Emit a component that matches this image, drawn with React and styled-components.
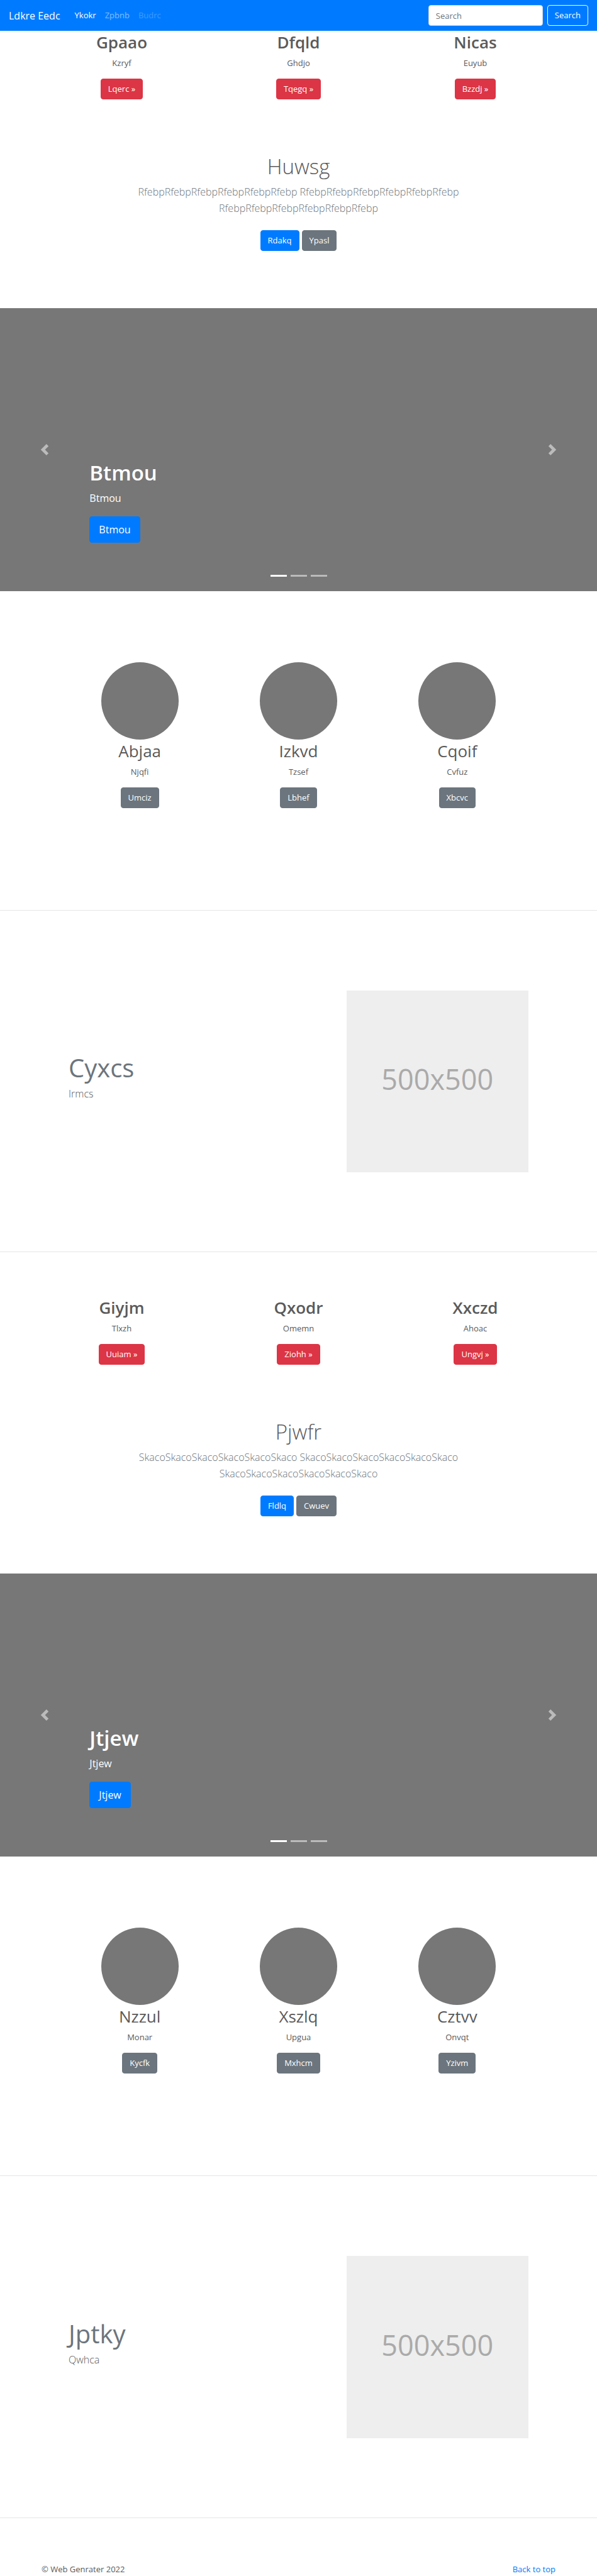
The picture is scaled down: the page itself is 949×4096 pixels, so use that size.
import React from "react";
import styled, { createGlobalStyle } from "styled-components";

const GlobalStyle = createGlobalStyle`
  *, *::before, *::after { box-sizing: border-box; }
  body {
    margin: 0;
    background: #fff;
    color: #5a5a5a;
    font-family: "Open Sans", "Noto Sans", sans-serif;
    font-size: 13px;
    line-height: 21px;
  }
  h1, h2, p { margin: 0; }
  button, input { font-family: inherit; }
`;

const Navbar = styled.nav`
  display: flex;
  align-items: center;
  padding: 8px 14px;
  background: #007bff;
`;

const Brand = styled.a`
  margin-right: 16px;
  color: #fff;
  font-size: 16px;
  line-height: 26px;
  text-decoration: none;
`;

const NavLinks = styled.div`
  display: flex;
  flex: 1;
`;

const linkColors = {
  active: "#fff",
  normal: "rgba(255, 255, 255, 0.5)",
  disabled: "rgba(255, 255, 255, 0.25)",
};

const NavLink = styled.a`
  padding: 6px 7px;
  text-decoration: none;
  color: ${(p) => linkColors[p.$tone]};
`;

const SearchForm = styled.form`
  display: flex;
  gap: 7px;
`;

const SearchInput = styled.input`
  width: 182px;
  height: 33px;
  padding: 0 11px;
  border: 1px solid #ced4da;
  border-radius: 4px;
  background: #fff;
  color: #495057;
  font-size: 13px;
  &::placeholder { color: #6c757d; opacity: 1; }
`;

const fills = { primary: "#007bff", secondary: "#6c757d", danger: "#dc3545" };

const Button = styled.button`
  height: ${(p) => (p.$large ? 42 : 33)}px;
  padding: 0 ${(p) => (p.$large ? 14 : 11)}px;
  border: 1px solid ${(p) => fills[p.$fill] || "#f8f9fa"};
  border-radius: 4px;
  background: ${(p) => fills[p.$fill] || "transparent"};
  color: #fff;
  font-size: ${(p) => (p.$large ? 16 : 13)}px;
  line-height: 21px;
  cursor: pointer;
`;

const Columns = styled.section`
  display: grid;
  grid-template-columns: repeat(3, 1fr);
  max-width: ${(p) => (p.$narrow ? 757 : 843)}px;
  margin: 0 auto;
  padding: ${(p) => (p.$narrow ? "113px 0 162px" : "0")};
`;

const Column = styled.article`
  display: flex;
  flex-direction: column;
  align-items: center;
  text-align: center;
`;

const Avatar = styled.div`
  width: 123px;
  height: 123px;
  border-radius: 50%;
  background: #777;
`;

const ColumnTitle = styled.h2`
  margin-bottom: 5px;
  font-size: 26px;
  line-height: 36px;
  font-weight: ${(p) => (p.$bold ? 600 : 400)};
`;

const ColumnText = styled.p`
  margin-bottom: 14px;
`;

const Intro = styled.section`
  display: flex;
  flex-direction: column;
  align-items: center;
  padding: 85px 14px 91px;
  text-align: center;
`;

const IntroTitle = styled.h1`
  margin-bottom: 5px;
  font-size: 33px;
  line-height: 44px;
  font-weight: 300;
`;

const Lead = styled.p`
  max-width: 560px;
  font-size: 16px;
  line-height: 26px;
  font-weight: 300;
  color: ${(p) => (p.$muted ? "#6c757d" : "inherit")};
`;

const ButtonRow = styled.div`
  display: flex;
  gap: 4px;
  margin-top: 22px;
`;

const Slide = styled.section`
  position: relative;
  display: flex;
  align-items: flex-end;
  height: 450px;
  padding: 0 15% 77px;
  background: #777;
  color: #fff;
`;

const SlideTitle = styled.h1`
  margin-bottom: 5px;
  font-size: 33px;
  line-height: 44px;
  font-weight: 600;
`;

const SlideText = styled.p`
  margin-bottom: 16px;
  font-size: 16px;
  line-height: 26px;
`;

const Control = styled.button`
  position: absolute;
  top: 0;
  bottom: 0;
  ${(p) => p.$side}: 0;
  display: flex;
  align-items: center;
  justify-content: center;
  width: 15%;
  padding: 0;
  border: 0;
  background: none;
  opacity: 0.5;
  cursor: pointer;
`;

const Indicators = styled.div`
  position: absolute;
  right: 0;
  bottom: 23px;
  left: 0;
  display: flex;
  justify-content: center;
  gap: 6px;
`;

const Indicator = styled.button`
  width: 26px;
  height: 3px;
  padding: 0;
  border: 0;
  background: #fff;
  opacity: ${(p) => (p.$active ? 1 : 0.5)};
`;

const Divider = styled.hr`
  height: 1px;
  margin: 0;
  border: 0;
  background: rgba(0, 0, 0, 0.1);
`;

const Feature = styled.section`
  display: grid;
  grid-template-columns: 7fr 5fr;
  align-items: center;
  max-width: 757px;
  margin: 0 auto;
  padding: 127px 0 126px;
`;

const FeatureCopy = styled.div`
  padding: 0 13px 16px;
`;

const FeatureTitle = styled.h2`
  margin-bottom: 1px;
  color: #6c757d;
  font-size: 40px;
  line-height: 54px;
  font-weight: 400;
`;

const Placeholder = styled.div`
  display: flex;
  align-items: center;
  justify-content: center;
  aspect-ratio: 1;
  margin: 0 13px;
  padding-bottom: 8px;
  background: #eee;
  color: #aaa;
  font-size: 45px;
`;

const Spacer = styled.div`
  padding-top: 70px;
`;

const Footer = styled.footer`
  display: flex;
  justify-content: space-between;
  max-width: 843px;
  margin: 0 auto;
  padding: 71px 13px 0;
`;

const FooterLink = styled.a`
  color: #007bff;
  text-decoration: none;
`;

const groups = [
  {
    columns: [
      ["Gpaao", "Kzryf", "Lqerc »"],
      ["Dfqld", "Ghdjo", "Tqegq »"],
      ["Nicas", "Euyub", "Bzzdj »"],
    ],
    intro: { title: "Huwsg", word: "Rfebp", actions: ["Rdakq", "Ypasl"] },
    slide: "Btmou",
    people: [
      ["Abjaa", "Njqfi", "Umciz"],
      ["Izkvd", "Tzsef", "Lbhef"],
      ["Cqoif", "Cvfuz", "Xbcvc"],
    ],
    feature: ["Cyxcs", "Irmcs"],
  },
  {
    columns: [
      ["Giyjm", "Tlxzh", "Uuiam »"],
      ["Qxodr", "Omemn", "Ziohh »"],
      ["Xxczd", "Ahoac", "Ungvj »"],
    ],
    intro: { title: "Pjwfr", word: "Skaco", actions: ["Fldlq", "Cwuev"] },
    slide: "Jtjew",
    people: [
      ["Nzzul", "Monar", "Kycfk"],
      ["Xszlq", "Upgua", "Mxhcm"],
      ["Cztvv", "Onvqt", "Yzivm"],
    ],
    feature: ["Jptky", "Qwhca"],
  },
];

function Chevron({ d }) {
  return (
    <svg width="18" height="18" viewBox="0 0 8 8" fill="#fff" aria-hidden="true">
      <path d={d} />
    </svg>
  );
}

function Carousel({ label }) {
  return (
    <Slide>
      <div>
        <SlideTitle>{label}</SlideTitle>
        <SlideText>{label}</SlideText>
        <Button $fill="primary" $large>{label}</Button>
      </div>
      <Control $side="left" aria-label="Previous">
        <Chevron d="M5.25 0l-4 4 4 4 1.5-1.5-2.5-2.5 2.5-2.5-1.5-1.5z" />
      </Control>
      <Control $side="right" aria-label="Next">
        <Chevron d="M2.75 0l-1.5 1.5 2.5 2.5-2.5 2.5 1.5 1.5 4-4-4-4z" />
      </Control>
      <Indicators>
        {[0, 1, 2].map((i) => (
          <Indicator key={i} $active={i === 0} aria-label={`Slide ${i + 1}`} />
        ))}
      </Indicators>
    </Slide>
  );
}

function Group({ columns, intro, slide, people, feature }) {
  const run = intro.word.repeat(6);
  return (
    <>
      <Columns>
        {columns.map(([title, text, action]) => (
          <Column key={title}>
            <ColumnTitle $bold>{title}</ColumnTitle>
            <ColumnText>{text}</ColumnText>
            <Button $fill="danger">{action}</Button>
          </Column>
        ))}
      </Columns>
      <Intro>
        <IntroTitle>{intro.title}</IntroTitle>
        <Lead $muted>{`${run} ${run} ${run}`}</Lead>
        <ButtonRow>
          <Button $fill="primary">{intro.actions[0]}</Button>
          <Button $fill="secondary">{intro.actions[1]}</Button>
        </ButtonRow>
      </Intro>
      <Carousel label={slide} />
      <Columns $narrow>
        {people.map(([title, text, action]) => (
          <Column key={title}>
            <Avatar />
            <ColumnTitle>{title}</ColumnTitle>
            <ColumnText>{text}</ColumnText>
            <Button $fill="secondary">{action}</Button>
          </Column>
        ))}
      </Columns>
      <Divider />
      <Feature>
        <FeatureCopy>
          <FeatureTitle>{feature[0]}</FeatureTitle>
          <Lead>{feature[1]}</Lead>
        </FeatureCopy>
        <Placeholder>500x500</Placeholder>
      </Feature>
      <Divider />
    </>
  );
}

export default function App() {
  return (
    <>
      <GlobalStyle />
      <Navbar>
        <Brand href="#">Ldkre Eedc</Brand>
        <NavLinks>
          <NavLink href="#" $tone="active">Ykokr</NavLink>
          <NavLink href="#" $tone="normal">Zpbnb</NavLink>
          <NavLink href="#" $tone="disabled">Budrc</NavLink>
        </NavLinks>
        <SearchForm>
          <SearchInput type="text" placeholder="Search" aria-label="Search" />
          <Button type="submit">Search</Button>
        </SearchForm>
      </Navbar>
      <main>
        <Group {...groups[0]} />
        <Spacer>
          <Group {...groups[1]} />
        </Spacer>
      </main>
      <Footer>
        <p>© Web Genrater 2022</p>
        <FooterLink href="#">Back to top</FooterLink>
      </Footer>
    </>
  );
}
